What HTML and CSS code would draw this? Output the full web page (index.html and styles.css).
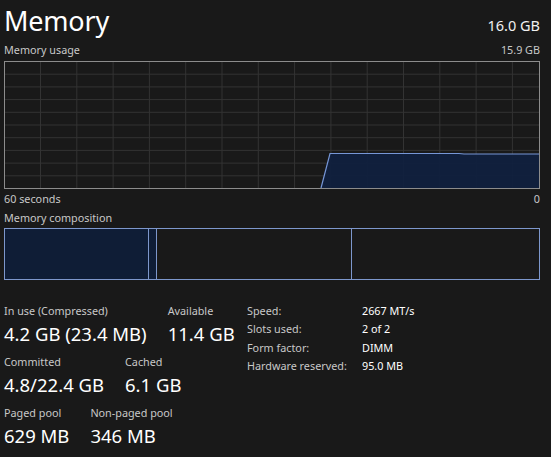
FILE: index.html
```html
<!DOCTYPE html>
<html>
<head>
<meta charset="utf-8">
<link rel="stylesheet" href="styles.css">
</head>
<body>
<div class="page">
  <div class="header">
    <div class="title">Memory</div>
    <div class="total">16.0 GB</div>
  </div>
  <div class="row-label">
    <span>Memory usage</span>
    <span>15.9 GB</span>
  </div>
  <div class="graph">
    <svg width="536" height="128" viewBox="0 0 536 128">
      <g stroke="#333" stroke-width="1">
        <line x1="0" y1="13.2" x2="536" y2="13.2"/>
        <line x1="0" y1="25.9" x2="536" y2="25.9"/>
        <line x1="0" y1="38.6" x2="536" y2="38.6"/>
        <line x1="0" y1="51.3" x2="536" y2="51.3"/>
        <line x1="0" y1="64" x2="536" y2="64"/>
        <line x1="0" y1="76.7" x2="536" y2="76.7"/>
        <line x1="0" y1="89.4" x2="536" y2="89.4"/>
        <line x1="0" y1="102.1" x2="536" y2="102.1"/>
        <line x1="0" y1="114.8" x2="536" y2="114.8"/>
        <line x1="36.5" y1="0" x2="36.5" y2="128"/>
        <line x1="72.8" y1="0" x2="72.8" y2="128"/>
        <line x1="109.1" y1="0" x2="109.1" y2="128"/>
        <line x1="145.4" y1="0" x2="145.4" y2="128"/>
        <line x1="181.7" y1="0" x2="181.7" y2="128"/>
        <line x1="218" y1="0" x2="218" y2="128"/>
        <line x1="254.3" y1="0" x2="254.3" y2="128"/>
        <line x1="290.6" y1="0" x2="290.6" y2="128"/>
        <line x1="326.9" y1="0" x2="326.9" y2="128"/>
        <line x1="363.2" y1="0" x2="363.2" y2="128"/>
        <line x1="399.5" y1="0" x2="399.5" y2="128"/>
        <line x1="435.8" y1="0" x2="435.8" y2="128"/>
        <line x1="472.1" y1="0" x2="472.1" y2="128"/>
        <line x1="508.4" y1="0" x2="508.4" y2="128"/>
      </g>
      <polygon points="317,127 326,92.5 455,92.5 460,93 535,93 535,127" fill="#0f1f3f" fill-opacity="0.92"/>
      <polyline points="317,127 326,92.5 455,92.5 460,93 535,93" fill="none" stroke="#7696d6" stroke-width="1.2"/>
      <rect x="0.5" y="0.5" width="535" height="127" fill="none" stroke="#8c8c8c" stroke-width="1"/>
    </svg>
  </div>
  <div class="row-label axis">
    <span>60 seconds</span>
    <span>0</span>
  </div>
  <div class="row-label comp-label">
    <span>Memory composition</span>
  </div>
  <div class="composition">
    <div class="seg inuse"></div>
    <div class="seg modified"></div>
    <div class="seg standby"></div>
    <div class="seg free"></div>
  </div>
  <div class="stats">
    <div class="left">
      <div class="srow">
        <div class="stat"><div class="lbl">In use (Compressed)</div><div class="val">4.2 GB (23.4 MB)</div></div>
        <div class="stat"><div class="lbl">Available</div><div class="val">11.4 GB</div></div>
      </div>
      <div class="srow">
        <div class="stat"><div class="lbl">Committed</div><div class="val">4.8/22.4 GB</div></div>
        <div class="stat"><div class="lbl">Cached</div><div class="val">6.1 GB</div></div>
      </div>
      <div class="srow">
        <div class="stat"><div class="lbl">Paged pool</div><div class="val">629 MB</div></div>
        <div class="stat"><div class="lbl">Non-paged pool</div><div class="val">346 MB</div></div>
      </div>
    </div>
    <div class="details">
      <span class="dk">Speed:</span><span class="dv">2667 MT/s</span>
      <span class="dk">Slots used:</span><span class="dv">2 of 2</span>
      <span class="dk">Form factor:</span><span class="dv">DIMM</span>
      <span class="dk">Hardware reserved:</span><span class="dv">95.0 MB</span>
    </div>
  </div>
</div>
</body>
</html>
```

FILE: styles.css
```css
html, body {
  margin: 0;
  padding: 0;
  background: #191919;
  color: #ffffff;
  font-family: "Noto Sans", "Open Sans", sans-serif;
}

.page {
  width: 536px;
  padding: 0 0 0 4px;
}

.header {
  display: flex;
  justify-content: space-between;
  align-items: baseline;
  height: 42px;
}

.title {
  font-size: 27px;
  line-height: 41px;
  font-weight: 400;
  letter-spacing: -0.2px;
}

.total {
  font-size: 14.5px;
  color: #f0f0f0;
}

.row-label {
  display: flex;
  justify-content: space-between;
  font-size: 10.8px;
  line-height: 16px;
  height: 19px;
  color: #c8c8c8;
}

.graph {
  height: 128px;
}

.graph svg {
  display: block;
}

.axis {
  height: 19px;
  line-height: 19px;
}

.comp-label {
  height: 20px;
  line-height: 20px;
}

.composition {
  display: flex;
  height: 52px;
  width: 536px;
  box-sizing: border-box;
  border: 1px solid #7d97cc;
}

.seg {
  height: 100%;
}

.inuse {
  width: 143px;
  background: #0f1d36;
  border-right: 1px solid #7d97cc;
}

.modified {
  width: 7px;
  background: #0f1d36;
  border-right: 1px solid #7d97cc;
}

.standby {
  width: 194px;
  border-right: 1px solid #7d97cc;
}

.free {
  flex: 1;
}

.stats {
  display: flex;
  margin-top: 23px;
}

.left {
  display: flex;
  flex-direction: column;
  width: 243px;
}

.srow {
  display: flex;
  gap: 21px;
  height: 51px;
}

.lbl {
  font-size: 10.8px;
  line-height: 16px;
  color: #c8c8c8;
}

.val {
  font-size: 18.5px;
  line-height: 26px;
  padding-top: 2px;
  color: #ffffff;
}

.details {
  display: grid;
  grid-template-columns: 115px auto;
  grid-auto-rows: 18.4px;
  align-content: start;
  font-size: 10.8px;
  line-height: 16px;
}

.dk {
  color: #c8c8c8;
}

.dv {
  color: #ffffff;
}
```
